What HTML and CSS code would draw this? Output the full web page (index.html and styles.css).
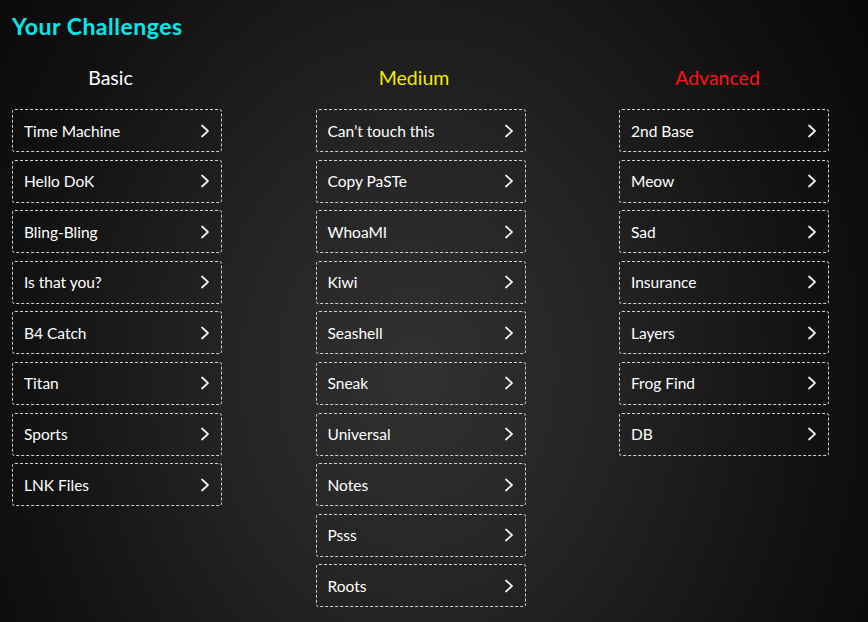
FILE: index.html
```html
<!DOCTYPE html>
<html>
<head>
<meta charset="utf-8">
<link rel="stylesheet" href="styles.css">
</head>
<body>
<div class="page">
  <h1 class="title">Your Challenges</h1>
  <div class="columns">
    <section class="col">
      <h2 class="level basic">Basic</h2>
      <ul class="list">
        <li class="item"><span>Time Machine</span><svg class="chev" viewBox="0 0 10 14"><path d="M2 1.5 L8 7 L2 12.5"/></svg></li>
        <li class="item"><span>Hello DoK</span><svg class="chev" viewBox="0 0 10 14"><path d="M2 1.5 L8 7 L2 12.5"/></svg></li>
        <li class="item"><span>Bling-Bling</span><svg class="chev" viewBox="0 0 10 14"><path d="M2 1.5 L8 7 L2 12.5"/></svg></li>
        <li class="item"><span>Is that you?</span><svg class="chev" viewBox="0 0 10 14"><path d="M2 1.5 L8 7 L2 12.5"/></svg></li>
        <li class="item"><span>B4 Catch</span><svg class="chev" viewBox="0 0 10 14"><path d="M2 1.5 L8 7 L2 12.5"/></svg></li>
        <li class="item"><span>Titan</span><svg class="chev" viewBox="0 0 10 14"><path d="M2 1.5 L8 7 L2 12.5"/></svg></li>
        <li class="item"><span>Sports</span><svg class="chev" viewBox="0 0 10 14"><path d="M2 1.5 L8 7 L2 12.5"/></svg></li>
        <li class="item"><span>LNK Files</span><svg class="chev" viewBox="0 0 10 14"><path d="M2 1.5 L8 7 L2 12.5"/></svg></li>
      </ul>
    </section>
    <section class="col">
      <h2 class="level medium">Medium</h2>
      <ul class="list">
        <li class="item"><span>Can’t touch this</span><svg class="chev" viewBox="0 0 10 14"><path d="M2 1.5 L8 7 L2 12.5"/></svg></li>
        <li class="item"><span>Copy PaSTe</span><svg class="chev" viewBox="0 0 10 14"><path d="M2 1.5 L8 7 L2 12.5"/></svg></li>
        <li class="item"><span>WhoaMI</span><svg class="chev" viewBox="0 0 10 14"><path d="M2 1.5 L8 7 L2 12.5"/></svg></li>
        <li class="item"><span>Kiwi</span><svg class="chev" viewBox="0 0 10 14"><path d="M2 1.5 L8 7 L2 12.5"/></svg></li>
        <li class="item"><span>Seashell</span><svg class="chev" viewBox="0 0 10 14"><path d="M2 1.5 L8 7 L2 12.5"/></svg></li>
        <li class="item"><span>Sneak</span><svg class="chev" viewBox="0 0 10 14"><path d="M2 1.5 L8 7 L2 12.5"/></svg></li>
        <li class="item"><span>Universal</span><svg class="chev" viewBox="0 0 10 14"><path d="M2 1.5 L8 7 L2 12.5"/></svg></li>
        <li class="item"><span>Notes</span><svg class="chev" viewBox="0 0 10 14"><path d="M2 1.5 L8 7 L2 12.5"/></svg></li>
        <li class="item"><span>Psss</span><svg class="chev" viewBox="0 0 10 14"><path d="M2 1.5 L8 7 L2 12.5"/></svg></li>
        <li class="item"><span>Roots</span><svg class="chev" viewBox="0 0 10 14"><path d="M2 1.5 L8 7 L2 12.5"/></svg></li>
      </ul>
    </section>
    <section class="col">
      <h2 class="level advanced">Advanced</h2>
      <ul class="list">
        <li class="item"><span>2nd Base</span><svg class="chev" viewBox="0 0 10 14"><path d="M2 1.5 L8 7 L2 12.5"/></svg></li>
        <li class="item"><span>Meow</span><svg class="chev" viewBox="0 0 10 14"><path d="M2 1.5 L8 7 L2 12.5"/></svg></li>
        <li class="item"><span>Sad</span><svg class="chev" viewBox="0 0 10 14"><path d="M2 1.5 L8 7 L2 12.5"/></svg></li>
        <li class="item"><span>Insurance</span><svg class="chev" viewBox="0 0 10 14"><path d="M2 1.5 L8 7 L2 12.5"/></svg></li>
        <li class="item"><span>Layers</span><svg class="chev" viewBox="0 0 10 14"><path d="M2 1.5 L8 7 L2 12.5"/></svg></li>
        <li class="item"><span>Frog Find</span><svg class="chev" viewBox="0 0 10 14"><path d="M2 1.5 L8 7 L2 12.5"/></svg></li>
        <li class="item"><span>DB</span><svg class="chev" viewBox="0 0 10 14"><path d="M2 1.5 L8 7 L2 12.5"/></svg></li>
      </ul>
    </section>
  </div>
</div>
</body>
</html>
```

FILE: styles.css
```css
html, body {
  margin: 0;
  padding: 0;
  height: 100%;
}
body {
  background: radial-gradient(ellipse 62% 110% at 48% 60%, #313131 0%, #242424 35%, #111111 75%, #080808 100%);
  color: #fff;
  font-family: "Lato", "Open Sans", sans-serif;
  overflow: hidden;
}
.page {
  padding: 13px 12px 0 12px;
}
.title {
  margin: 0;
  font-size: 23px;
  font-weight: 700;
  color: #00eaea;
  line-height: 26px;
  letter-spacing: 0.5px;
}
.columns {
  display: grid;
  grid-template-columns: 210px 210px 210px;
  column-gap: 93.5px;
  margin-top: 27px;
}
.level {
  margin: 0 0 19px 0;
  padding-right: 13px;
  text-align: center;
  font-size: 19.5px;
  font-weight: 400;
  line-height: 24px;
}
.basic { color: #ffffff; }
.medium { color: #f2ea00; }
.advanced { color: #ff1212; }
.list {
  list-style: none;
  margin: 0;
  padding: 0;
  display: flex;
  flex-direction: column;
  gap: 7.6px;
}
.item {
  box-sizing: border-box;
  height: 43px;
  border: 1px dashed #cfcfcf;
  border-radius: 3px;
  display: flex;
  align-items: center;
  justify-content: space-between;
  padding: 0 11px 0 11px;
  font-size: 15.5px;
  color: #fff;
}
.chev {
  width: 10px;
  height: 14px;
  fill: none;
  stroke: #f2f2f2;
  stroke-width: 1.7;
  stroke-linecap: round;
  stroke-linejoin: round;
}
```
